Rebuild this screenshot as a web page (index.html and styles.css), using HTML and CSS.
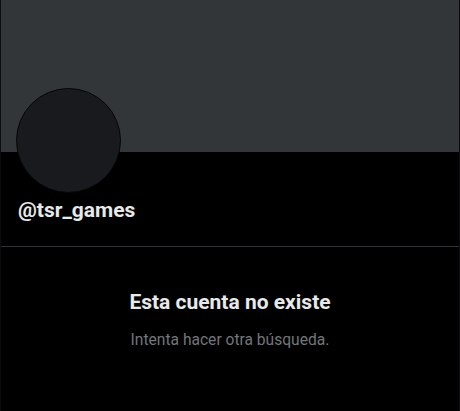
FILE: index.html
```html
<!DOCTYPE html>
<html lang="es">
<head>
<meta charset="utf-8">
<title>@tsr_games</title>
<link rel="stylesheet" href="styles.css">
</head>
<body>
<main class="column">
  <div class="banner"></div>
  <section class="profile">
    <div class="avatar"></div>
    <div class="handle">@tsr_games</div>
  </section>
  <section class="empty">
    <h1 class="empty-title">Esta cuenta no existe</h1>
    <p class="empty-text">Intenta hacer otra búsqueda.</p>
  </section>
</main>
</body>
</html>
```
FILE: styles.css
```css
html, body {
  margin: 0;
  padding: 0;
  background: #000;
}
body {
  font-family: Roboto, "Noto Sans", "Liberation Sans", sans-serif;
  color: #e7e9ea;
  height: 411px;
  overflow: hidden;
}
.column {
  width: 458px;
  min-height: 411px;
  border-left: 1px solid #0b0c0d;
  border-right: 1px solid #0b0c0d;
}
.banner {
  height: 152px;
  background: #333639;
}
.profile {
  display: flow-root;
  padding: 0 16px 0 15px;
  border-bottom: 1px solid #2f3336;
  height: 94px;
}
.avatar {
  width: 103px;
  height: 103px;
  margin-top: -64px;
  border-radius: 50%;
  background: #181a1e;
  border: 1px solid #050505;
}
.handle {
  margin-top: 5px;
  margin-left: 2px;
  font-size: 21px;
  line-height: 24px;
  font-weight: 700;
}
.empty {
  display: flex;
  flex-direction: column;
  align-items: center;
  padding-top: 43px;
}
.empty-title {
  margin: 0;
  font-size: 21px;
  line-height: 24px;
  font-weight: 700;
}
.empty-text {
  margin: 16px 0 0;
  font-size: 15.6px;
  line-height: 20px;
  color: #71767b;
}
```
